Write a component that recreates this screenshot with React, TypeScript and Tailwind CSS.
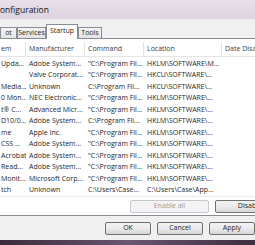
import React from "react";

const rows: [string, string, string, string][] = [
  ["Upda...", "Adobe System...", "\"C:\\Program Fil...", "HKLM\\SOFTWARE\\M..."],
  ["", "Valve Corporat...", "\"C:\\Program Fil...", "HKCU\\SOFTWARE\\..."],
  ["Media...", "Unknown", "C:\\Program Fil...", "HKCU\\SOFTWARE\\..."],
  ["0 Mon...", "NEC Electronic...", "\"C:\\Program Fil...", "HKLM\\SOFTWARE\\..."],
  ["t\u00ae C...", "Advanced Micr...", "\"C:\\Program Fil...", "HKLM\\SOFTWARE\\..."],
  ["D10/0...", "Adobe System...", "C:\\Program Fil...", "HKLM\\SOFTWARE\\..."],
  ["me", "Apple Inc.", "\"C:\\Program Fil...", "HKLM\\SOFTWARE\\..."],
  ["CSS ...", "Adobe System...", "\"C:\\Program Fil...", "HKLM\\SOFTWARE\\..."],
  ["Acrobat", "Adobe System...", "\"C:\\Program Fil...", "HKLM\\SOFTWARE\\..."],
  ["Read...", "Adobe System...", "\"C:\\Program Fil...", "HKLM\\SOFTWARE\\..."],
  ["Monit...", "Microsoft Corp...", "\"C:\\Program Fil...", "HKLM\\SOFTWARE\\..."],
  ["tch", "Unknown", "C:\\Users\\Case...", "C:\\Users\\Case\\App..."],
];

function Tab({ label, selected, w }: { label: string; selected?: boolean; w: string }) {
  if (selected) {
    return (
      <div
        className={`${w} h-[15px] -mb-px border border-b-0 border-[#898c95] bg-white flex items-start justify-center pt-[1px] relative z-10`}
      >
        {label}
      </div>
    );
  }
  return (
    <div
      className={`${w} h-[11px] border border-b-0 border-[#898c95] bg-gradient-to-b from-[#f5f5f5] to-[#e3e3e3] flex items-center justify-center`}
    >
      {label}
    </div>
  );
}

function Btn({ label, w, disabled }: { label: React.ReactNode; w: string; disabled?: boolean }) {
  return (
    <div
      className={`${w} h-[13px] shrink-0 rounded-[2px] border flex items-center justify-center ${
        disabled
          ? "border-[#c5c8cc] bg-[#f4f4f4] text-[#9a9a9a]"
          : "border-[#707070] bg-gradient-to-b from-[#f2f2f2] via-[#ebebeb] to-[#d6d6d6] text-[#1e1e1e]"
      }`}
    >
      {label}
    </div>
  );
}

export default function App() {
  return (
    <div
      className="w-[255px] h-[245px] overflow-hidden bg-[#f0f0f0] flex flex-col text-[7px] text-[#262626]"
      style={{ fontFamily: '"Open Sans", "Noto Sans", sans-serif' }}
    >
      {/* title bar */}
      <div className="h-[19px] shrink-0 bg-gradient-to-b from-[#e9e0ea] to-[#dcd2e1] flex items-center text-[8.5px] text-[#111]">
        <span className="pt-[1px]">onfiguration</span>
      </div>
      {/* tabs */}
      <div className="h-[19px] shrink-0 flex items-end pt-[5px]">
        <Tab label="ot" w="w-[17px]" />
        <Tab label="Services" w="w-[29px]" />
        <Tab label="Startup" w="w-[32px]" selected />
        <Tab label="Tools" w="w-[24px]" />
      </div>
      {/* panel */}
      <div className="h-[178px] shrink-0 bg-white border-t border-b border-[#898c95] flex flex-col pt-[3px]">
        {/* list */}
        <div className="h-[155px] flex flex-col border-b border-[#ececec]">
          <div className="h-[15px] shrink-0 flex items-center border-b border-[#e5e5e5] text-[#34404e]">
            <div className="w-[26px] h-full flex items-center border-r border-[#e5e5e5] pl-[1px]">em</div>
            <div className="w-[59px] h-full flex items-center border-r border-[#e5e5e5] pl-[3px]">Manufacturer</div>
            <div className="w-[59px] h-full flex items-center border-r border-[#e5e5e5] pl-[3px]">Command</div>
            <div className="w-[78px] h-full flex items-center border-r border-[#e5e5e5] pl-[3px]">Location</div>
            <div className="flex-1 h-full flex items-center pl-[3px] whitespace-nowrap overflow-hidden">Date Disabled</div>
          </div>
          <div className="flex flex-col pt-[1px]">
            {rows.map((r, i) => (
              <div key={i} className="h-[11.5px] flex items-center whitespace-nowrap">
                <div className="w-[26px] overflow-hidden pl-[1px]">{r[0]}</div>
                <div className="w-[59px] overflow-hidden pl-[3px]">{r[1]}</div>
                <div className="w-[59px] overflow-hidden pl-[3px]">{r[2]}</div>
                <div className="w-[78px] overflow-hidden pl-[3px]">{r[3]}</div>
              </div>
            ))}
          </div>
        </div>
        <div className="flex gap-[6px] pl-[130px] pt-[3px]">
          <Btn label="Enable all" w="w-[79px]" disabled />
          <Btn label="Disable all" w="w-[79px]" />
        </div>
      </div>
      {/* bottom buttons */}
      <div className="h-[24px] shrink-0 flex items-start pt-[6px] gap-[6px] pl-[105px]">
        <Btn label="OK" w="w-[46px]" />
        <Btn label="Cancel" w="w-[46px]" />
        <Btn label="Apply" w="w-[46px]" />
      </div>
      <div className="flex-1 bg-gradient-to-r from-[#3a2c3c] via-[#6b5570] to-[#3d3040]" />
    </div>
  );
}
